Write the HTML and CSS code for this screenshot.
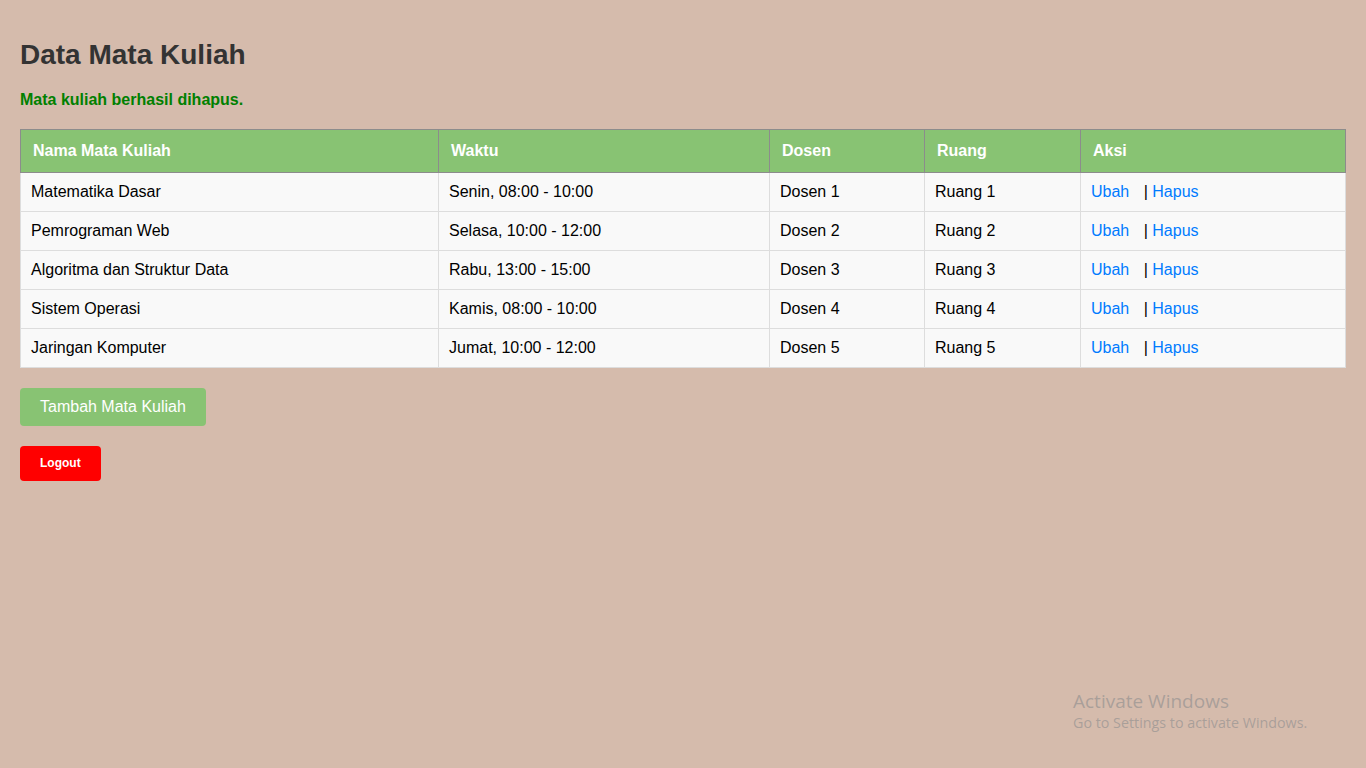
FILE: index.html
```html
<!DOCTYPE html>
<html lang="id">
<head>
<meta charset="utf-8">
<title>Data Mata Kuliah</title>
<link rel="stylesheet" href="styles.css">
</head>
<body>
<div class="page">
  <h1 class="title">Data Mata Kuliah</h1>
  <p class="message">Mata kuliah berhasil dihapus.</p>
  <table class="data">
    <colgroup>
      <col class="c-nama">
      <col class="c-waktu">
      <col class="c-dosen">
      <col class="c-ruang">
      <col class="c-aksi">
    </colgroup>
    <thead>
      <tr><th>Nama Mata Kuliah</th><th>Waktu</th><th>Dosen</th><th>Ruang</th><th>Aksi</th></tr>
    </thead>
    <tbody>
      <tr><td>Matematika Dasar</td><td>Senin, 08:00 - 10:00</td><td>Dosen 1</td><td>Ruang 1</td><td><a href="#" class="act">Ubah</a> | <a href="#">Hapus</a></td></tr>
      <tr><td>Pemrograman Web</td><td>Selasa, 10:00 - 12:00</td><td>Dosen 2</td><td>Ruang 2</td><td><a href="#" class="act">Ubah</a> | <a href="#">Hapus</a></td></tr>
      <tr><td>Algoritma dan Struktur Data</td><td>Rabu, 13:00 - 15:00</td><td>Dosen 3</td><td>Ruang 3</td><td><a href="#" class="act">Ubah</a> | <a href="#">Hapus</a></td></tr>
      <tr><td>Sistem Operasi</td><td>Kamis, 08:00 - 10:00</td><td>Dosen 4</td><td>Ruang 4</td><td><a href="#" class="act">Ubah</a> | <a href="#">Hapus</a></td></tr>
      <tr><td>Jaringan Komputer</td><td>Jumat, 10:00 - 12:00</td><td>Dosen 5</td><td>Ruang 5</td><td><a href="#" class="act">Ubah</a> | <a href="#">Hapus</a></td></tr>
    </tbody>
  </table>
  <div class="actions">
    <a href="#" class="btn-add">Tambah Mata Kuliah</a>
    <button class="btn-logout" type="button">Logout</button>
  </div>
</div>
<div class="watermark">
  <div class="wm-title">Activate Windows</div>
  <div class="wm-sub">Go to Settings to activate Windows.</div>
</div>
</body>
</html>
```

FILE: styles.css
```css
html, body {
  margin: 0;
  padding: 0;
}
body {
  background: #d5bbac;
  font-family: "Liberation Sans", Arial, sans-serif;
  color: #000;
  min-height: 768px;
  position: relative;
}
.page {
  padding: 20px;
}
.title {
  font-size: 28px;
  font-weight: bold;
  color: #333;
  margin: 19px 0 0;
  line-height: 32px;
}
.message {
  color: #008000;
  font-weight: bold;
  font-size: 16px;
  line-height: 18px;
  margin: 20px 0 0;
}
.data {
  margin-top: 20px;
  width: 1325px;
  border-collapse: collapse;
  table-layout: fixed;
  font-size: 16px;
}
.c-nama { width: 418px; }
.c-waktu { width: 331px; }
.c-dosen { width: 155px; }
.c-ruang { width: 156px; }
.c-aksi { width: 265px; }
.data th {
  background: #88c373;
  color: #fff;
  font-weight: bold;
  text-align: left;
  padding: 12px;
  line-height: 18px;
  border: 1px solid #8c8c8c;
}
.data td {
  background: #f9f9f9;
  padding: 10px;
  line-height: 18px;
  border: 1px solid #dddddd;
}
.data a {
  color: #007bff;
  text-decoration: none;
}
.data a.act {
  margin-right: 10px;
}
.actions {
  display: flex;
  flex-direction: column;
  align-items: flex-start;
  gap: 20px;
  margin-top: 20px;
}
.btn-add {
  display: inline-block;
  background: #88c373;
  color: #fff;
  text-decoration: none;
  font-size: 16px;
  line-height: 18px;
  padding: 10px 20px;
  border-radius: 4px;
}
.btn-logout {
  background: #ff0000;
  color: #fff;
  border: none;
  border-radius: 4px;
  font-family: "Liberation Sans", Arial, sans-serif;
  font-size: 12px;
  font-weight: bold;
  line-height: 15px;
  padding: 10px 20px;
  cursor: pointer;
}
.watermark {
  position: absolute;
  left: 1073px;
  top: 689px;
  color: rgba(140, 140, 140, 0.6);
  font-family: "Open Sans", "Noto Sans", sans-serif;
}
.wm-title {
  font-size: 19px;
  line-height: 24px;
}
.wm-sub {
  font-size: 14.3px;
  line-height: 19px;
}
```
